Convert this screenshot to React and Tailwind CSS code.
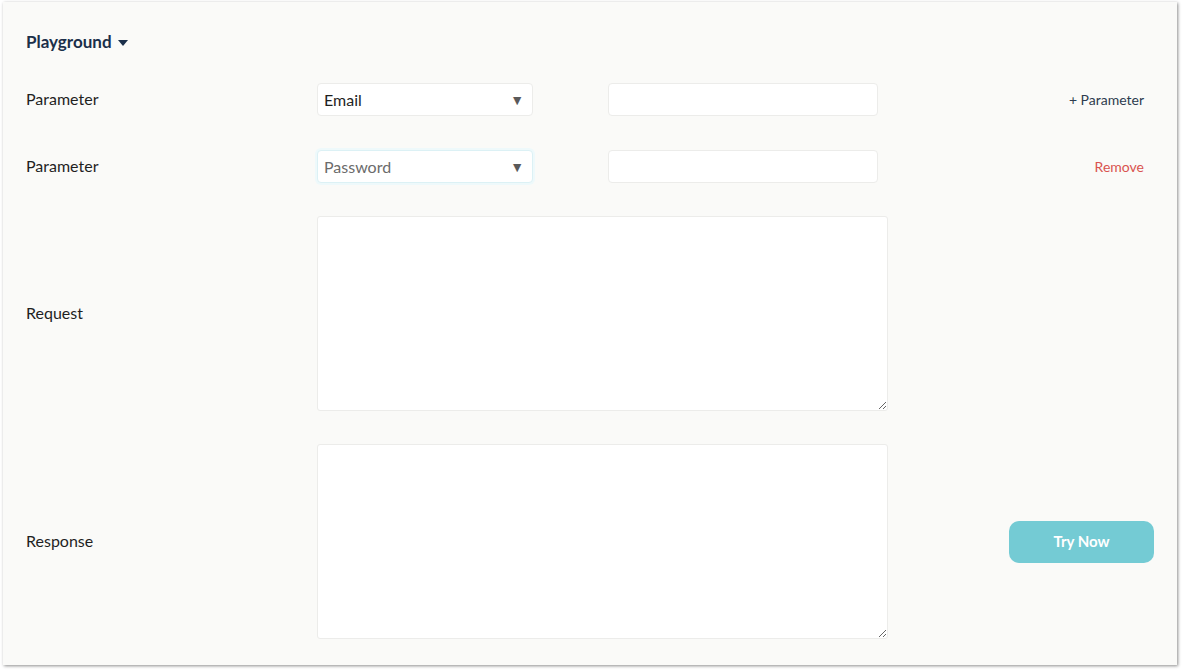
import { useState } from 'react'

function Caret({ className }) {
  return (
    <svg viewBox="0 0 10 6" className={className} fill="currentColor">
      <path d="M0 0h10L5 6z" />
    </svg>
  )
}

function Select({ value, focused, muted }) {
  return (
    <div
      className={`flex h-[33px] w-[216px] items-center rounded-[4px] border bg-white pl-[6px] pr-3 ${
        focused ? 'border-[#dcf1f5] shadow-[0_0_0_2px_#eef9fb]' : 'border-[#ececea]'
      }`}
    >
      <span className={`text-[16px] ${muted ? 'text-[#6b6b6b]' : 'text-[#1f1f1f]'}`}>{value}</span>
      <span className="ml-auto -mr-[4px] text-[14px] text-[#5a5a5a]">▼</span>
    </div>
  )
}

function ParamRow({ value, focused, muted, action, actionClass }) {
  return (
    <div className="flex h-[33px] items-center">
      <div className="-mt-[2px] w-[291px] text-[16px] text-[#1f1f1f]">Parameter</div>
      <Select value={value} focused={focused} muted={muted} />
      <input className="ml-[75px] h-[33px] w-[270px] rounded-[4px] border border-[#ececea] bg-white outline-none" />
      <button className={`ml-auto mr-[10px] text-[14px] ${actionClass}`}>{action}</button>
    </div>
  )
}

export default function App() {
  const [req, setReq] = useState('')
  const [res, setRes] = useState('')

  return (
    <div className="h-[672px] w-[1183px] bg-white pl-[3px] pt-[2px]" style={{ fontFamily: 'Lato, "Open Sans", sans-serif' }}>
      <div className="flex h-[663px] w-[1174px] flex-col bg-[#fafaf8] pl-[23px] pr-[23px] pt-[29px] shadow-[1px_1px_3px_rgba(0,0,0,0.45)]">
        <div className="flex h-[22px] items-center gap-[6px] text-[17px] font-bold text-[#1b2f4a]">
          Playground
          <Caret className="mt-[2px] h-[6px] w-[10px]" />
        </div>

        <div className="mt-[30px] flex flex-col gap-[34px]">
          <ParamRow value="Email" action="+ Parameter" actionClass="text-[#2d3c4f]" />
          <ParamRow value="Password" focused muted action="Remove" actionClass="text-[#d9534f]" />
        </div>

        <div className="mt-[33px] flex items-center">
          <div className="-mt-[2px] w-[291px] text-[16px] text-[#1f1f1f]">Request</div>
          <textarea
            value={req}
            onChange={(e) => setReq(e.target.value)}
            className="h-[195px] w-[571px] rounded-[3px] border border-[#ececea] bg-white outline-none"
          />
        </div>

        <div className="mt-[33px] flex items-center">
          <div className="-mt-[2px] w-[291px] text-[16px] text-[#1f1f1f]">Response</div>
          <textarea
            value={res}
            onChange={(e) => setRes(e.target.value)}
            className="h-[195px] w-[571px] rounded-[3px] border border-[#ececea] bg-white outline-none"
          />
          <button className="ml-auto h-[42px] w-[145px] rounded-[10px] bg-[#74cbd4] text-[15px] font-bold text-white">
            Try Now
          </button>
        </div>
      </div>
    </div>
  )
}
